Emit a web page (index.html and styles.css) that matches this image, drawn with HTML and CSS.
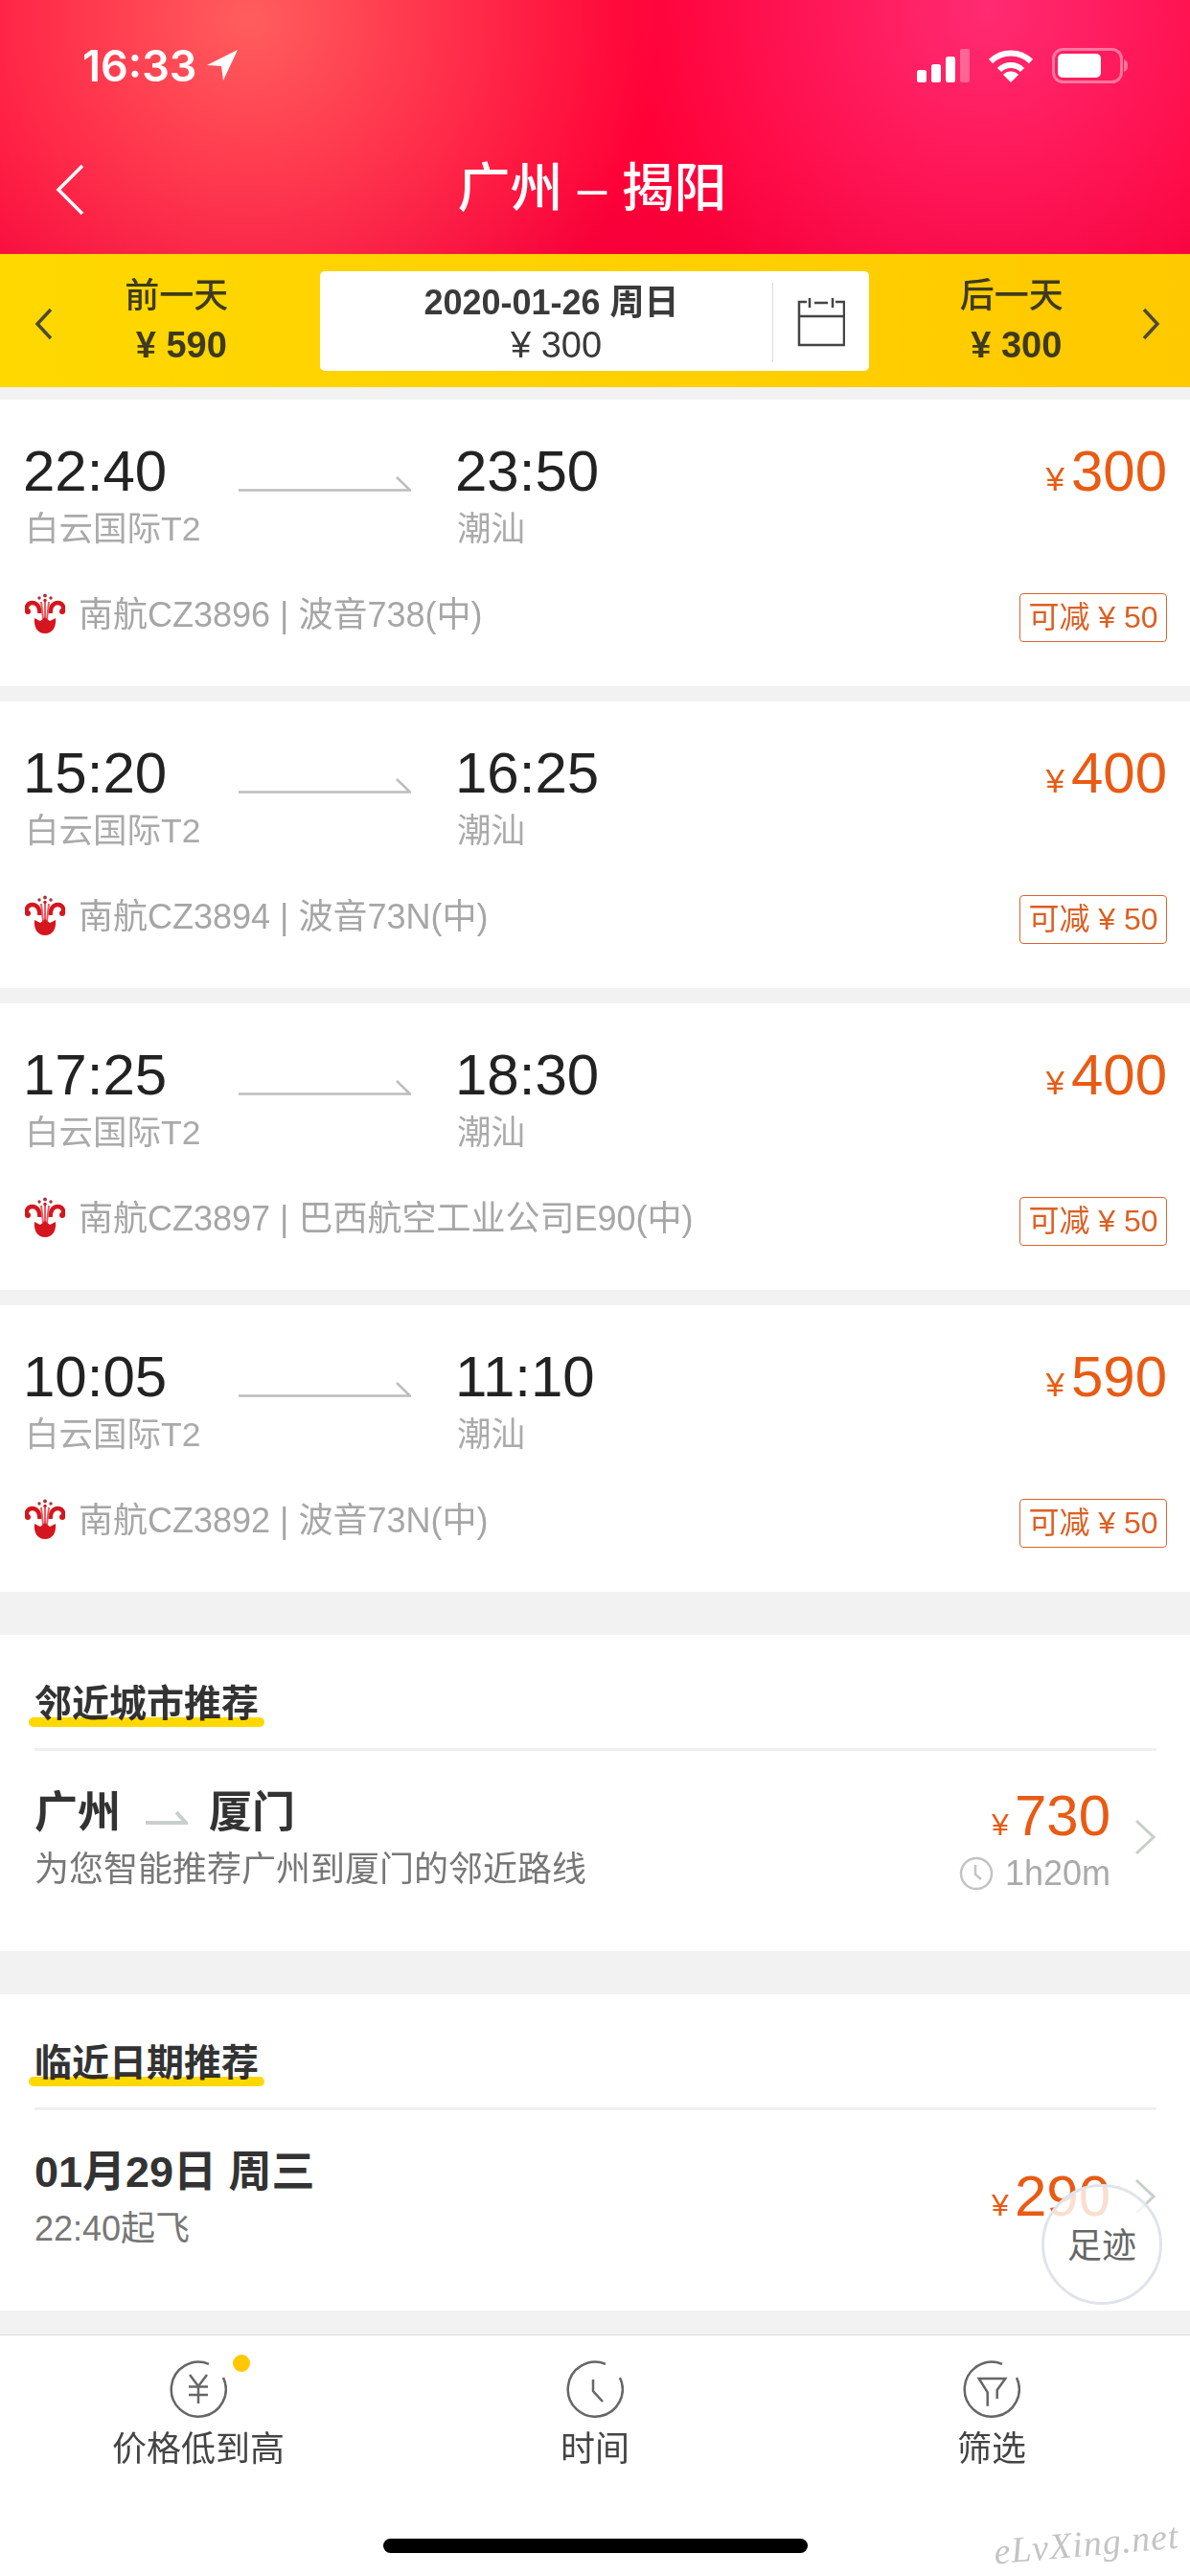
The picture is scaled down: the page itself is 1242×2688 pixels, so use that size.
FILE: index.html
```html
<!DOCTYPE html>
<html lang="zh-CN">

<head>
    <meta charset="UTF-8">
    <meta name="viewport" content="width=device-width, initial-scale=1.0">
    <title>广州 - 揭阳</title>
    <link rel="stylesheet" href="styles.css">
</head>

<body>
    <svg class="defs" width="0" height="0">
        <!-- 南航 logo -->
        <symbol id="cz" viewBox="0 0 42 42">
            <path d="M2.500 19c-2-5 1-9 5-9 5 0 8 4 8 11M39.500 19c2-5-1-9-5-9-5 0-8 4-8 11" fill="none" stroke="#d5161e" stroke-width="4.500" />
            <circle cx="3" cy="19" r="3" fill="#d5161e" />
            <circle cx="39" cy="19" r="3" fill="#d5161e" />
            <path d="M17 9l2 18M21 9v18M25 9l-2 18" fill="none" stroke="#e85c62" stroke-width="2" />
            <circle cx="21" cy="2.500" r="1.900" fill="#a8343a" />
            <circle cx="15" cy="5" r="1.700" fill="#a8343a" />
            <circle cx="27" cy="5" r="1.700" fill="#a8343a" />
            <circle cx="21" cy="7.500" r="1.700" fill="#d5161e" />
            <path d="M10 26l6 3 5-4 5 4 6-3c1 9-3 16-11 16S9 35 10 26z" fill="#d5161e" />
        </symbol>
        <symbol id="flight-arrow" viewBox="0 0 180 16">
            <path d="M0 14.500h179L165 1" fill="none" stroke="#bdbdbd" stroke-width="2.500" />
        </symbol>
    </svg>

    <header class="top">
        <div class="status">
            <div class="clock">16:33
                <svg class="loc" width="34" height="34" viewBox="0 0 34 34"><path d="M33 1L1 17l15 1 2 15z" fill="#fff" /></svg>
            </div>
            <div class="status-icons">
                <svg width="55" height="35" viewBox="0 0 55 35">
                    <rect x="0" y="22" width="10" height="13" rx="2.500" fill="#fff" />
                    <rect x="15" y="16" width="10" height="19" rx="2.500" fill="#fff" />
                    <rect x="30" y="8" width="10" height="27" rx="2.500" fill="#fff" />
                    <rect x="45" y="0" width="10" height="35" rx="2" fill="#fff" opacity="0.3" />
                </svg>
                <svg width="48" height="35" viewBox="0 0 48 35">
                    <path d="M3 13a30 30 0 0 1 42 0M12 22a17 17 0 0 1 24 0" fill="none" stroke="#fff" stroke-width="6" />
                    <path d="M24 35l-8-8a11 11 0 0 1 16 0z" fill="#fff" />
                </svg>
                <svg width="79" height="37" viewBox="0 0 79 37">
                    <rect x="1.500" y="1.500" width="71" height="34" rx="10" fill="none" stroke="#fff" stroke-opacity="0.4" stroke-width="3" />
                    <rect x="6" y="6" width="45" height="25" rx="5" fill="#fff" />
                    <path d="M75 12c3 1 4 3 4 6.500s-1 5.500-4 6.500z" fill="#fff" opacity="0.4" />
                </svg>
            </div>
        </div>
        <div class="nav">
            <svg class="back" width="30" height="54" viewBox="0 0 30 54"><path d="M28 2L3 27l25 25" fill="none" stroke="#fff" stroke-width="3.500" /></svg>
            <div class="nav-title">广州 – 揭阳</div>
        </div>
    </header>

    <div class="datebar">
        <svg class="date-arrow date-prev" width="22" height="34" viewBox="0 0 22 34"><path d="M18 2L4 17l14 15" fill="none" stroke="#4a4a3a" stroke-width="3.500" /></svg>
        <div class="date-side">
            <p>前一天</p>
            <p class="date-price">¥ 590</p>
        </div>
        <div class="date-box">
            <div class="date-now">
                <p class="date-day">2020-01-26 周日</p>
                <p class="date-fare">¥ 300</p>
            </div>
            <div class="date-cal">
                <svg width="50" height="52" viewBox="0 0 50 52" fill="none" stroke="#444" stroke-width="2.500">
                    <path d="M10 5H2v45h47V5h-9M2 20h47M13 1v10M37 1v10M18 6h14" />
                </svg>
            </div>
        </div>
        <div class="date-side">
            <p>后一天</p>
            <p class="date-price">¥ 300</p>
        </div>
        <svg class="date-arrow date-next" width="22" height="34" viewBox="0 0 22 34"><path d="M4 2l14 15L4 32" fill="none" stroke="#4a4a3a" stroke-width="3.500" /></svg>
    </div>

    <div class="flights">
        <div class="flight">
            <div class="flight-top">
                <div class="dep">
                    <p class="time">22:40</p>
                    <p class="place">白云国际T2</p>
                </div>
                <svg class="way" width="180" height="16"><use href="#flight-arrow" /></svg>
                <div class="arr">
                    <p class="time">23:50</p>
                    <p class="place">潮汕</p>
                </div>
                <div class="fare"><span class="yen">¥</span>300</div>
            </div>
            <div class="flight-info">
                <svg class="logo" width="42" height="42"><use href="#cz" /></svg>
                <span class="info-text">南航CZ3896 | 波音738(中)</span>
                <span class="tag">可减 ¥ 50</span>
            </div>
        </div>
        <div class="flight">
            <div class="flight-top">
                <div class="dep">
                    <p class="time">15:20</p>
                    <p class="place">白云国际T2</p>
                </div>
                <svg class="way" width="180" height="16"><use href="#flight-arrow" /></svg>
                <div class="arr">
                    <p class="time">16:25</p>
                    <p class="place">潮汕</p>
                </div>
                <div class="fare"><span class="yen">¥</span>400</div>
            </div>
            <div class="flight-info">
                <svg class="logo" width="42" height="42"><use href="#cz" /></svg>
                <span class="info-text">南航CZ3894 | 波音73N(中)</span>
                <span class="tag">可减 ¥ 50</span>
            </div>
        </div>
        <div class="flight">
            <div class="flight-top">
                <div class="dep">
                    <p class="time">17:25</p>
                    <p class="place">白云国际T2</p>
                </div>
                <svg class="way" width="180" height="16"><use href="#flight-arrow" /></svg>
                <div class="arr">
                    <p class="time">18:30</p>
                    <p class="place">潮汕</p>
                </div>
                <div class="fare"><span class="yen">¥</span>400</div>
            </div>
            <div class="flight-info">
                <svg class="logo" width="42" height="42"><use href="#cz" /></svg>
                <span class="info-text">南航CZ3897 | 巴西航空工业公司E90(中)</span>
                <span class="tag">可减 ¥ 50</span>
            </div>
        </div>
        <div class="flight">
            <div class="flight-top">
                <div class="dep">
                    <p class="time">10:05</p>
                    <p class="place">白云国际T2</p>
                </div>
                <svg class="way" width="180" height="16"><use href="#flight-arrow" /></svg>
                <div class="arr">
                    <p class="time">11:10</p>
                    <p class="place">潮汕</p>
                </div>
                <div class="fare"><span class="yen">¥</span>590</div>
            </div>
            <div class="flight-info">
                <svg class="logo" width="42" height="42"><use href="#cz" /></svg>
                <span class="info-text">南航CZ3892 | 波音73N(中)</span>
                <span class="tag">可减 ¥ 50</span>
            </div>
        </div>
    </div>

    <!-- 推荐 -->
    <section class="rec">
        <div class="rec-head"><span class="rec-title">邻近城市推荐</span></div>
        <div class="rec-row">
            <div class="rec-left">
                <p class="rec-main">广州
                    <svg class="rec-way" width="44" height="14" viewBox="0 0 44 14"><path d="M0 12h42L32 1" fill="none" stroke="#c9cfcc" stroke-width="4" /></svg>
                    厦门</p>
                <p class="rec-sub">为您智能推荐广州到厦门的邻近路线</p>
            </div>
            <div class="rec-right">
                <div class="rec-fare"><span class="yen">¥</span>730</div>
                <div class="rec-dur">
                    <svg width="36" height="36" viewBox="0 0 36 36" fill="none" stroke="#c4c4c4" stroke-width="2.500"><circle cx="18" cy="18" r="16" /><path d="M17 9v10l6 5" /></svg>
                    1h20m
                </div>
            </div>
            <svg class="rec-more" width="24" height="38" viewBox="0 0 24 38"><path d="M3 2l18 17L3 36" fill="none" stroke="#c6d0c8" stroke-width="3" /></svg>
        </div>
    </section>

    <section class="rec">
        <div class="rec-head"><span class="rec-title">临近日期推荐</span></div>
        <div class="rec-row">
            <div class="rec-left">
                <p class="rec-main">01月29日 周三</p>
                <p class="rec-sub">22:40起飞</p>
            </div>
            <div class="rec-right">
                <div class="rec-fare rec-fare-mid"><span class="yen">¥</span>290</div>
            </div>
            <svg class="rec-more" width="24" height="38" viewBox="0 0 24 38"><path d="M3 2l18 17L3 36" fill="none" stroke="#c6d0c8" stroke-width="3" /></svg>
        </div>
        <div class="trail">足迹</div>
    </section>

    <footer class="tabs">
        <div class="tab">
            <div class="tab-icon">
                <svg width="60" height="60" viewBox="0 0 60 60" fill="none" stroke="#666" stroke-width="2.500">
                    <path d="M41 3.800A28.500 28.500 0 1 0 56 18" />
                    <path d="M21 15l9 12 9-12M20 27.500h20M20 36h20M30 27v18" />
                </svg>
                <span class="tab-dot"></span>
            </div>
            <p>价格低到高</p>
        </div>
        <div class="tab">
            <div class="tab-icon">
                <svg width="60" height="60" viewBox="0 0 60 60" fill="none" stroke="#666" stroke-width="2.500">
                    <path d="M41 3.800A28.500 28.500 0 1 0 56 18" />
                    <path d="M28 20v12l10 11" />
                </svg>
            </div>
            <p>时间</p>
        </div>
        <div class="tab">
            <div class="tab-icon">
                <svg width="60" height="60" viewBox="0 0 60 60" fill="none" stroke="#666" stroke-width="2.500">
                    <path d="M41 3.800A28.500 28.500 0 1 0 56 18" />
                    <path d="M25.700 47.700V33.300L16.700 19h27.600l-8.600 12v9" />
                </svg>
            </div>
            <p>筛选</p>
        </div>
    </footer>

    <div class="home-bar"></div>
    <div class="mark">eLvXing.net</div>
</body>

</html>
```

FILE: styles.css
```css
* {
    box-sizing: border-box;
}

html,
body {
    margin: 0;
    padding: 0;
}

body {
    position: relative;
    width: 1242px;
    height: 2688px;
    overflow: hidden;
    background-color: #f2f2f2;
    font-family: 'Liberation Sans', 'Noto Sans CJK SC', sans-serif;
}

p {
    margin: 0;
}

.defs {
    position: absolute;
}

/* 顶部 */
.top {
    height: 265px;
    padding: 50px 65px 0 86px;
    color: white;
    background-color: #ff0037;
    background-image:
        radial-gradient(circle at 260px 20px, rgba(255, 110, 100, 0.85), rgba(255, 60, 70, 0) 430px),
        radial-gradient(circle at 1030px 10px, rgba(255, 50, 125, 0.85), rgba(255, 40, 100, 0) 380px),
        linear-gradient(180deg, #ff0037 60%, #f7003a);
}

.status {
    display: flex;
    justify-content: space-between;
    align-items: center;
    height: 36px;
}

.clock {
    display: flex;
    align-items: center;
    gap: 10px;
    font-family: 'Inter', 'Liberation Sans', sans-serif;
    font-size: 45px;
    font-weight: 600;
}

.status-icons {
    display: flex;
    align-items: center;
    gap: 19px;
}

.nav {
    position: relative;
    margin-top: 80px;
    height: 60px;
    text-align: center;
}

.back {
    position: absolute;
    left: -28px;
    top: 5px;
}

.nav-title {
    font-size: 55px;
    line-height: 60px;
    font-weight: 500;
    margin-left: -27px;
}

/* 날짜 */
.datebar {
    display: flex;
    align-items: center;
    height: 139px;
    padding: 0 30px 0 35px;
    background: linear-gradient(90deg, #ffd800, #ffc900);
    color: #3e3a20;
}

.date-arrow {
    margin-top: 6px;
}

.date-prev {
    margin-right: -22px;
}

.date-next {
    margin-left: -15px;
}

.date-side {
    width: 299px;
    text-align: center;
    font-size: 36px;
    font-weight: 500;
    line-height: 46px;
}

.date-price {
    margin-top: 5px;
    padding-left: 10px;
    font-size: 38px;
    font-weight: bold;
}

.date-box {
    display: flex;
    flex-shrink: 0;
    width: 573px;
    height: 104px;
    border-radius: 5px;
    background-color: white;
    color: #3a3a3a;
}

.date-now {
    flex: 1;
    padding: 11px 0 0 12px;
    text-align: center;
    font-size: 36px;
    line-height: 44px;
}

.date-day {
    font-weight: bold;
}

.date-fare {
    padding-left: 10px;
    font-size: 38px;
}

.date-cal {
    display: flex;
    align-items: center;
    justify-content: center;
    width: 101px;
    height: 83px;
    margin-top: 12px;
    border-left: 1px solid #ddd;
}

/* 航班 */
.flights {
    display: flex;
    flex-direction: column;
    gap: 16px;
    padding-top: 13px;
}

.flight {
    height: 299px;
    padding: 45px 24px 0 24px;
    background-color: white;
}

.flight-top {
    display: flex;
}

.dep {
    width: 225px;
}

.way {
    margin: 35px 46px 0 0;
}

.arr {
    flex: 1;
}

.time {
    font-size: 60px;
    line-height: 60px;
    color: #222;
}

.place {
    margin-top: 5px;
    padding-left: 2px;
    font-size: 35.500px;
    line-height: 50px;
    color: #aaa;
}

.fare {
    font-size: 60px;
    line-height: 60px;
    color: #e95b13;
}

.yen {
    margin-right: 7px;
    font-size: 35px;
}

.flight-info {
    display: flex;
    align-items: center;
    margin-top: 28px;
    padding-left: 2px;
}

.logo {
    margin: 5px 14px 0 0;
}

.info-text {
    flex: 1;
    font-size: 36px;
    color: #a6a6a6;
}

.tag {
    width: 154px;
    height: 51px;
    margin-top: 14px;
    border: 1px solid #d9662c;
    border-radius: 4px;
    text-align: center;
    font-size: 32px;
    line-height: 49px;
    color: #dd5f22;
}

/* 推荐 */
.rec {
    position: relative;
    height: 330px;
    margin-top: 45px;
    padding: 0 35px 0 36px;
    background-color: white;
}

.rec-head {
    height: 121px;
    padding-top: 48px;
    border-bottom: 3px solid #f0f0f0;
}

.rec-title {
    display: inline-block;
    position: relative;
    font-size: 39px;
    line-height: 48px;
    font-weight: bold;
    color: #333;
}

.rec-title::after {
    content: '';
    position: absolute;
    left: -6px;
    right: -6px;
    bottom: 0;
    height: 10px;
    border-radius: 5px;
    background-color: #ffd800;
    mix-blend-mode: multiply;
}

.rec-row {
    display: flex;
    align-items: flex-start;
    padding-top: 39px;
}

.rec-left {
    flex: 1;
}

.rec-main {
    font-size: 45px;
    line-height: 52px;
    font-weight: bold;
    color: #333;
}

.rec-way {
    margin: 0 10px 0 13px;
    vertical-align: 3px;
}

.rec-sub {
    margin-top: 10px;
    font-size: 36px;
    line-height: 46px;
    color: #777;
}

.rec-right {
    text-align: right;
}

.rec-fare {
    margin-top: -1px;
    font-size: 60px;
    line-height: 60px;
    color: #e95b13;
}

.rec-fare-mid {
    margin-top: 21px;
}

.rec-fare .yen {
    margin-right: 6px;
    font-size: 32px;
}

.rec-dur {
    display: flex;
    align-items: center;
    justify-content: flex-end;
    gap: 12px;
    font-size: 36px;
    color: #aaa;
}

.rec-more {
    margin: 32px 0 0 24px;
}

.trail {
    position: absolute;
    right: 29px;
    bottom: 6px;
    width: 126px;
    height: 126px;
    border: 3px solid #dfe4ec;
    border-radius: 50%;
    background-color: rgba(255, 255, 255, 0.8);
    text-align: center;
    font-size: 36px;
    line-height: 124px;
    color: #666;
}

/* 底部 */
.tabs {
    display: flex;
    height: 262px;
    margin-top: 25px;
    padding-top: 26px;
    border-top: 1px solid #ddd;
    background-color: white;
}

.tab {
    flex: 1;
    text-align: center;
    font-size: 36px;
    line-height: 44px;
    color: #444;
}

.tab-icon {
    position: relative;
    width: 60px;
    height: 60px;
    margin: 0 auto 11px;
}

.tab-dot {
    position: absolute;
    left: 66px;
    top: -6px;
    width: 18px;
    height: 18px;
    border-radius: 50%;
    background-color: #ffc800;
}

.home-bar {
    position: absolute;
    left: 400px;
    top: 2649px;
    width: 443px;
    height: 15px;
    border-radius: 8px;
    background-color: black;
}

.mark {
    position: absolute;
    left: 1037px;
    top: 2632px;
    transform: rotate(-5deg);
    font-family: 'Liberation Serif', serif;
    font-style: italic;
    font-size: 38px;
    letter-spacing: 1px;
    color: #c4c4c4;
}
```
